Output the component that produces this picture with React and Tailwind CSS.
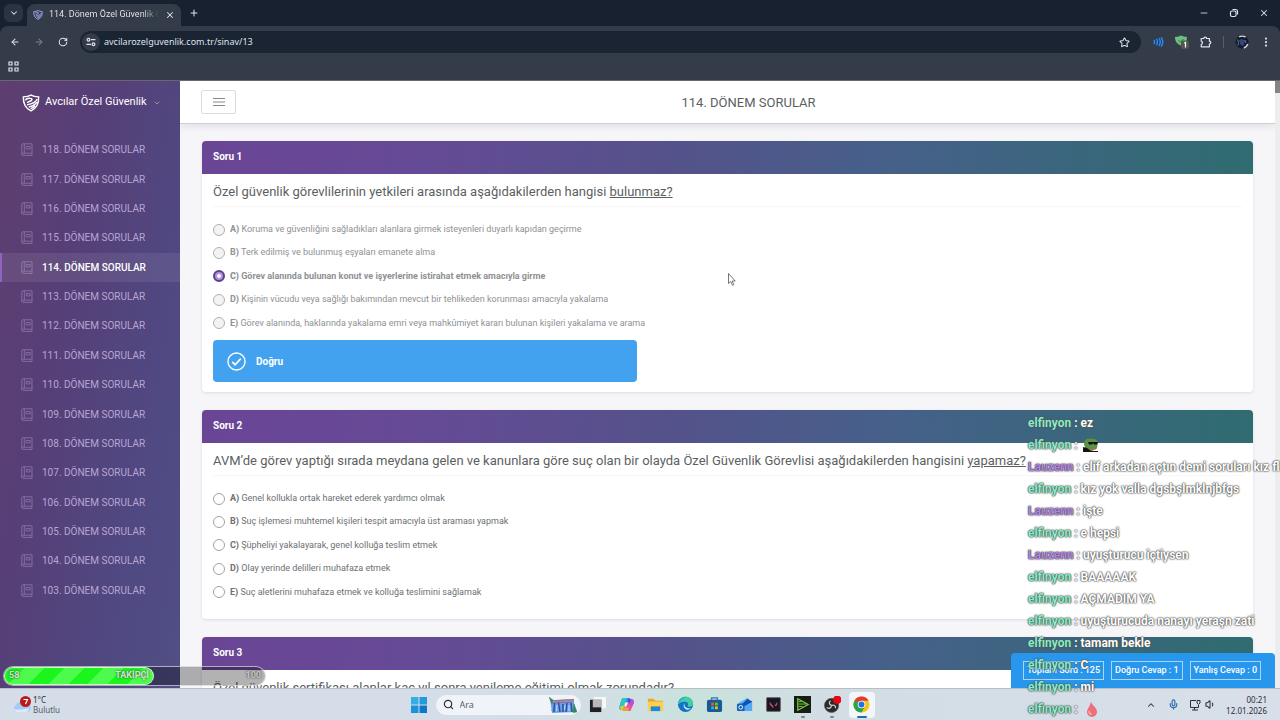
import React, { useState } from "react";
import {
  ChevronDown, ChevronUp, X, Plus, ArrowLeft, ArrowRight, RotateCw, Star, Minus, Search, Mic, Volume1, EllipsisVertical,
} from "lucide-react";

const exams = [118, 117, 116, 115, 114, 113, 112, 111, 110, 109, 108, 107, 106, 105, 104, 103];

const questions = [
  {
    no: 1,
    text: "Özel güvenlik görevlilerinin yetkileri arasında aşağıdakilerden hangisi ",
    end: "bulunmaz?",
    options: [
      "Koruma ve güvenliğini sağladıkları alanlara girmek isteyenleri duyarlı kapıdan geçirme",
      "Terk edilmiş ve bulunmuş eşyaları emanete alma",
      "Görev alanında bulunan konut ve işyerlerine istirahat etmek amacıyla girme",
      "Kişinin vücudu veya sağlığı bakımından mevcut bir tehlikeden korunması amacıyla yakalama",
      "Görev alanında, haklarında yakalama emri veya mahkûmiyet kararı bulunan kişileri yakalama ve arama",
    ],
    answered: 2,
  },
  {
    no: 2,
    text: "AVM’de görev yaptığı sırada meydana gelen ve kanunlara göre suç olan bir olayda Özel Güvenlik Görevlisi aşağıdakilerden hangisini ",
    end: "yapamaz?",
    options: [
      "Genel kollukla ortak hareket ederek yardımcı olmak",
      "Suç işlemesi muhtemel kişileri tespit amacıyla üst araması yapmak",
      "Şüpheliyi yakalayarak, genel kolluğa teslim etmek",
      "Olay yerinde delilleri muhafaza etmek",
      "Suç aletlerini muhafaza etmek ve kolluğa teslimini sağlamak",
    ],
  },
  {
    no: 3,
    text: "Özel güvenlik sertifikası alanlar kaç yıl sonra yenileme eğitimi olmak zorundadır?",
    end: "",
    options: [],
  },
];

const chat = [
  ["elfinyon", "ez"],
  ["elfinyon", "frog"],
  ["Lauzenn", "elif arkadan açtın demi soruları kız fl"],
  ["elfinyon", "kız yok valla dgsbşlmklnjbfgs"],
  ["Lauzenn", "işte"],
  ["elfinyon", "e hepsi"],
  ["Lauzenn", "uyuşturucu içtiysen"],
  ["elfinyon", "BAAAAAK"],
  ["elfinyon", "AÇMADIM YA"],
  ["elfinyon", "uyuşturucuda nanayı yeraşn zati"],
  ["elfinyon", "tamam bekle"],
  ["elfinyon", "C"],
  ["elfinyon", "mi"],
  ["elfinyon", "drop"],
];

function Shield({ className }) {
  return (
    <svg viewBox="0 0 20 20" className={className} fill="none" stroke="currentColor" strokeWidth="1.6" aria-hidden="true">
      <path d="M1.500 3.200C4.500 3 7.500 2.400 10 1.200c2.500 1.200 5.500 1.800 8.500 2 .3 6.500-1.600 12.300-8.500 15.600C3.100 15.500 1.200 9.700 1.500 3.200z" />
      <path d="M3.500 7c1.500-2 4.500-2.800 7-1.800 1 .5.500 1.800-.5 2.300L5.500 9.500M17 5.500c-1.500 3.600-6 5.500-11.500 6.600M16.500 9c-1.500 2.600-4.800 4.500-9 5.400M14.500 13c-1.200 1.600-2.800 2.600-5 3.200" />
    </svg>
  );
}

function Book() {
  return (
    <svg viewBox="0 0 12 13" className="h-[13px] w-3 shrink-0 opacity-45" fill="none" stroke="currentColor" strokeWidth="1" aria-hidden="true">
      <path d="M2 .8h9v9.400H2.200A1.500 1.500 0 0 0 .8 11.500V2A1.200 1.200 0 0 1 2 .8zM.8 11.500c0 .5.500.9 1.200.9h9v-2.200M3.300.8v9.400M5.200 3.500h4v2.400h-4z" />
    </svg>
  );
}

function Browser() {
  return (
    <header className="shrink-0 bg-[#17212f] font-['Noto_Sans',sans-serif] text-[#dfe3ea]">
      <div className="flex h-[26px] items-center">
        <button aria-label="Sekmelerde ara" className="ml-1 grid h-[18px] w-[19px] place-items-center rounded-md bg-[#2b3442]">
          <ChevronDown className="size-2.5" strokeWidth={2.5} />
        </button>
        <div className="ml-1 flex h-[22px] w-[154px] items-center self-end rounded-t-lg bg-[#343c49] px-1.5">
          <Shield className="size-2.5 shrink-0 text-[#aeb4ff]" />
          <span className="ml-1.5 w-[111px] overflow-hidden whitespace-nowrap bg-gradient-to-r from-[#eceff4] from-85% to-transparent bg-clip-text font-[Roboto,sans-serif] text-[9px] text-transparent">
            114. Dönem Özel Güvenlik Çıkm
          </span>
          <button aria-label="Sekmeyi kapat" className="ml-1.5"><X className="size-2.5" strokeWidth={2.5} /></button>
        </div>
        <button aria-label="Yeni sekme" className="ml-2"><Plus className="size-2.5" strokeWidth={2.5} /></button>
        <div className="ml-auto flex items-center gap-5 pr-[11px]">
          <button aria-label="Simge durumuna küçült"><Minus className="size-2.5" strokeWidth={2} /></button>
          <button aria-label="Önceki boyut">
            <svg viewBox="0 0 10 10" className="size-2.5" fill="none" stroke="currentColor" strokeWidth="1.200"><rect x="1.500" y="3" width="5.500" height="5.500" rx="1.500" /><path d="M3.500 1.500h3a2 2 0 0 1 2 2v3" /></svg>
          </button>
          <button aria-label="Kapat"><X className="size-2.5" strokeWidth={2.5} /></button>
        </div>
      </div>
      <div className="rounded-t-lg border-b border-[#6b6473] bg-[#343c49]">
        <div className="flex h-8 items-center pl-2.5 pr-2">
          <button aria-label="Geri"><ArrowLeft className="size-2.5" strokeWidth={2.5} /></button>
          <button aria-label="İleri" className="ml-3.5 text-[#7b828d]"><ArrowRight className="size-2.5" strokeWidth={2.5} /></button>
          <button aria-label="Yenile" className="ml-3.5"><RotateCw className="size-2.5" strokeWidth={2.5} /></button>
          <div className="ml-3 flex h-[22px] flex-1 items-center rounded-full bg-[#1b2432] pl-0.5 pr-[11px]">
            <span className="grid size-[18px] place-items-center rounded-full bg-[#343c49]">
              <svg viewBox="0 0 10 10" className="size-2.5" fill="none" stroke="currentColor" strokeWidth="1.200"><circle cx="2.500" cy="2.700" r="1.400" /><path d="M5 2.700h4.500M.5 7.300H5" /><circle cx="7.500" cy="7.300" r="1.400" /></svg>
            </span>
            <input aria-label="Adres" defaultValue="avcilarozelguvenlik.com.tr/sinav/13" className="ml-1 w-0 flex-1 bg-transparent text-[9px] outline-none" />
            <button aria-label="Yer işareti ekle"><Star className="size-[11px]" strokeWidth={2.2} /></button>
          </div>
          <div className="ml-3 flex items-center gap-[11px]">
            <svg viewBox="0 0 11 10" className="h-2.5 w-[11px]" fill="none" stroke="#1e90ff" strokeWidth="1.400" strokeLinecap="round"><path d="M1.200 3.500c.5 1 .5 2 0 3M3.700 2.300c1 1.800 1 3.600 0 5.400M6.200 1.500c1.400 2.300 1.400 4.700 0 7M8.500.8c1.700 2.800 1.700 5.600 0 8.400" /></svg>
            <svg viewBox="0 0 14 14" className="size-3.5"><path d="M0 2c3 0 4.500-.5 6-1.400C7.500 1.500 9.500 2 12 2c0 4.500-2 7-6 8.500C2 9 0 6.500 0 2z" fill="#68c27b" /><path d="M3.500 5.500l2 1.500 3-3" fill="none" stroke="#2d6a3e" /><rect x="6" y="5.500" width="8" height="8.500" rx="2" fill="#56544f" /><path d="M9.300 8.200l1.200-.8v5" fill="none" stroke="#fff" strokeWidth="1.200" /></svg>
            <svg viewBox="0 0 12 12" className="size-3" fill="none" stroke="currentColor" strokeWidth="1.200" strokeLinejoin="round"><path d="M1.200 2.500h2.600a1.400 1.400 0 0 1 2.800 0h2.800v2.700a1.400 1.400 0 0 1 0 2.800v2.800H1.200V8.500a1.800 1.800 0 0 0 0-3.400z" /></svg>
            <span className="h-3 w-px bg-[#565e6b]" />
            <svg viewBox="0 0 14 14" className="size-3.5"><circle cx="7" cy="7" r="6.500" fill="#121a2b" /><path d="M4 2C6 .8 8 .8 10.500 2M12.800 9c-.6 2-2 3.200-4 4" stroke="#d4dce6" strokeWidth="1.400" fill="none" /><path d="M4 5l3-1 3 1.500L8.500 11l-3-1z" fill="#34477a" /><path d="M2.500 4.500l1 3-.5 3M10 5l1 3" stroke="#6b7996" fill="none" /></svg>
            <button aria-label="Menü"><EllipsisVertical className="size-3" strokeWidth={2.5} /></button>
          </div>
        </div>
        <div className="flex h-[22px] items-start pl-2 pt-[3px]">
          <button aria-label="Uygulamalar">
            <svg viewBox="0 0 11 11" className="size-[11px]" fill="none" stroke="currentColor" strokeWidth="1.200"><path d="M1 1h3v3H1zM7 1h3v3H7zM1 7h3v3H1zM7 7h3v3H7z" /></svg>
          </button>
        </div>
      </div>
    </header>
  );
}

function Sidebar() {
  return (
    <nav aria-label="Sınavlar" className="flex w-[180px] shrink-0 flex-col bg-[linear-gradient(100deg,#5f3e70_0%,#563f77_35%,#504982_75%,#504f84_100%)] pb-[83px]">
      <a href="#home" className="flex h-[43px] items-center pl-[22px] text-white">
        <Shield className="size-[18px] shrink-0" />
        <span className="ml-[5px] text-[11px]">Avcılar Özel Güvenlik</span>
        <ChevronDown className="ml-1.5 size-2 opacity-60" />
      </a>
      <ul className="mt-[11px] flex flex-1 flex-col">
        {exams.map((n) => (
          <li key={n} className="flex flex-1">
            <a
              href={"#sinav-" + n}
              className={
                n === 114
                  ? "flex flex-1 items-center gap-[9px] border-l-2 border-[#8f63c4] bg-white/8 pl-[19px] text-[10px] font-medium text-white"
                  : "flex flex-1 items-center gap-[9px] border-l-2 border-transparent pl-[19px] text-[10px] text-[#b9a5d3]"
              }
            >
              <span className="flex text-[#b9a5d3]"><Book /></span>
              {n}. DÖNEM SORULAR
            </a>
          </li>
        ))}
      </ul>
    </nav>
  );
}

function Question({ q }) {
  const done = q.answered !== undefined;
  const [picked, setPicked] = useState(q.answered);
  return (
    <section className="shrink-0 rounded-sm bg-white shadow-[0_1px_3px_rgba(60,50,90,0.12)]">
      <h2 className="flex h-[33px] items-center rounded-t-sm bg-[linear-gradient(95deg,#6a4596_0%,#664a96_20%,#54528a_45%,#46608a_65%,#2f6c70_100%)] px-[11px] pb-0.5 text-[10px] font-bold text-white">
        Soru {q.no}
      </h2>
      <div className="px-[11px]">
        <p className="flex h-[33px] items-center whitespace-pre border-b border-[#f7f7f8] pt-1 text-[13px] leading-4 text-[#5c5f61]">
          {q.text}<u>{q.end}</u>
        </p>
        {q.options.length > 0 && (
          <div className={done ? "w-[424px] pb-[10px]" : "pb-[15px]"}>
            <div role="radiogroup" aria-label={"Soru " + q.no} className="mt-[11px] grid h-[117px] grid-rows-5">
              {q.options.map((o, i) => (
                <label key={o} className={"flex items-center whitespace-nowrap text-[9px] " + (done ? "text-[#8e9194] " : "text-[#6c6f73] ") + (picked === i ? "font-bold" : "")}>
                  <input
                    type="radio"
                    name={"soru" + q.no}
                    checked={picked === i}
                    onChange={() => !done && setPicked(i)}
                    className={
                      done
                        ? "mr-[5px] size-3 appearance-none rounded-full border border-[#aeb1b4] bg-[#f1f3f4] checked:border-2 checked:border-[#5b3f8f] checked:bg-[radial-gradient(circle,#fff_25%,#b494dd_40%)]"
                        : "mr-[5px] size-3 appearance-none rounded-full border border-[#a0a3a6] bg-white checked:border-[#5b3f8f] checked:bg-[#b494dd]"
                    }
                  />
                  <span><b>{"ABCDE"[i]})</b> {o}</span>
                </label>
              ))}
            </div>
            {done && (
              <div role="status" className="mt-[5px] flex h-[42px] items-center rounded-sm bg-[#42a2ef] pl-[14px] text-[10px] font-bold text-white">
                <svg viewBox="0 0 20 20" className="mr-2.5 size-[19px]" fill="none" stroke="currentColor" strokeWidth="1.500"><circle cx="10" cy="10" r="9" /><path d="M5.500 10.500l3 3 6-6.500" strokeWidth="1.800" /></svg>
                Doğru
              </div>
            )}
          </div>
        )}
      </div>
    </section>
  );
}

function Page() {
  return (
    <main className="flex min-w-0 flex-1 flex-col overflow-hidden bg-[#f6f5f8]">
      <div className="flex h-[43px] shrink-0 items-center border-b border-[#cfced3] bg-white pl-[21px] pr-[22px] shadow-[0_2px_8px_rgba(60,60,80,0.12)]">
        <button aria-label="Menüyü aç" className="grid h-6 w-[35px] place-items-center rounded-xs border border-[#dcdcde] text-[#86888c]">
          <svg viewBox="0 0 12 10" className="h-2.5 w-3" stroke="currentColor" strokeWidth="1"><path d="M0 1.500h12M0 5h12M0 8.500h12" /></svg>
        </button>
        <h1 className="flex-1 pl-2 pt-0.5 text-center text-[13px] text-[#5c5f61]">114. DÖNEM SORULAR</h1>
      </div>
      <div className="flex flex-1 flex-col gap-[18px] overflow-hidden px-[22px] pt-[17px]">
        {questions.map((q) => <Question key={q.no} q={q} />)}
      </div>
    </main>
  );
}

const appIcons = [
  ["Görev görünümü", <><path d="M5 1h13v12H5z" fill="#f7f7f7" /><path d="M1 4h12v13H1z" fill="#202022" /><path d="M4 4h9v8H4z" fill="#b9b9bb" /></>],
  ["Copilot", <><path d="M6 2h5c2 0 2 1 2.600 3l1 3H9L7 13c-.6 2-1.500 2-3 2-3 0-3-3-2.300-5L4 4c.4-1.300 1-2 2-2z" fill="#2a9df0" /><path d="M12 16H7c-2 0-2-1-2.600-3l-.8-3H8l3-5c.6-2 1.500-2 3-2 3 0 3.500 3 2.500 5.500L14 14c-.5 1.300-1 2-2 2z" fill="#e84fa5" /><path d="M2 9l1.500-5C4 2.500 5 2 6 2h3L6.500 10 4 12z" fill="#2fc7c0" /><path d="M2 11l4-1 1 5c-3 1-5-1-5-4z" fill="#c8d936" /><path d="M6 12l3 0 3 1-1 3H7c-1.500 0-2-1-2.400-3z" fill="#f79a35" /><path d="M10 5l1-2.500c2 0 2.500 1.500 3 3.500l2 1-4 1z" fill="#315bd8" /><path d="M7.500 7h3L9 11H6.500z" fill="#eef3f8" /><path d="M14 4c2 0 3 2 2.500 4l-3 3-1-4z" fill="#b34fe0" /></>],
  ["Dosya Gezgini", <><path d="M1 3h6l2 2h8v11H1z" fill="#e9a825" /><path d="M1 6h16v10H1z" fill="#ffd04f" /><path d="M4 11h10v5H4z" fill="#2388d4" /></>],
  ["Edge", <><circle cx="9" cy="9" r="8" fill="#1274c5" /><path d="M1 9a8 8 0 0 1 16-1c0 3-3 4-6 3 2-3 0-5-3-5-4 0-6 2-7 3z" fill="#41cfa8" /><path d="M1 9a8 8 0 0 1 10-7.700C6 2 3 5 1 9z" fill="#2aa9d8" /><path d="M8 8c-1 3 2 6 7 5-3 3-8 1-8-3 0-1 .5-1.700 1-2z" fill="#d7f1f5" /></>],
  ["Store", <><path d="M6 4V2h6v2" fill="none" stroke="#2d77b8" strokeWidth="1.500" /><rect x="1" y="4" width="16" height="13" rx="2" fill="#155c97" /><path d="M5.500 7h3v3h-3z" fill="#f35325" /><path d="M9.500 7h3v3h-3z" fill="#81bc06" /><path d="M5.500 11h3v3h-3z" fill="#35a9ee" /><path d="M9.500 11h3v3h-3z" fill="#ffba08" /></>],
  ["Outlook", <><path d="M3 7l9-5 5 4-9 5z" fill="#57bbf5" /><path d="M4 9l13-4v11H4z" fill="#2670dd" /><path d="M8 11l9-5v10H9z" fill="#53a9f4" /><path d="M12 3l5 3-9 5-2-2z" fill="#1550b4" /><rect x="1" y="8" width="8" height="8" rx="1.500" fill="#1260b8" /><circle cx="5" cy="12" r="2" fill="none" stroke="#fff" /></>],
  ["Valorant", <><path d="M2 2h14v14H2z" fill="#111923" stroke="#462333" /><path d="M5 6l4 5v1.500H8L5 9zM13 6v3l-1.200 1.500H10z" fill="#e0405a" /></>],
  ["Müzik düzenleyici", <><path d="M0 0h18v18H0z" fill="#171c17" /><path d="M4 3v12l11-6z" fill="none" stroke="#7bd13b" strokeWidth="1.300" /><path d="M5 6h3M5 8.500h8M5 11h4" stroke="#7bd13b" /></>],
  ["OBS", <><circle cx="8" cy="10" r="7.500" fill="#2a2a2d" stroke="#555" strokeWidth=".7" /><path d="M8 10c-3-1-3-4-1-5M8 10c3-1 5 1 4 3M8 10c-.5 3-3 4-5 2" stroke="#c9c9cd" strokeWidth="1.300" fill="none" /><circle cx="14" cy="4" r="4.500" fill="#e30613" /></>],
  ["Chrome", <><circle cx="9" cy="9" r="8.500" fill="#fbc116" /><path d="M9 9L1.600 4.800A8.500 8.500 0 0 1 16.400 5H9z" fill="#e33b2e" /><path d="M9 9L1.600 4.800A8.500 8.500 0 0 0 9 17.500l3.500-6z" fill="#2ba24c" /><circle cx="9" cy="9" r="4" fill="#fff" /><circle cx="9" cy="9" r="3.100" fill="#1a73e8" /></>],
];

function Taskbar() {
  return (
    <footer className="flex h-8 shrink-0 items-center border-t border-[#b9bec6] bg-[linear-gradient(90deg,#d5dde8_0%,#d5dde8_38%,#cfe0e2_50%,#c9e2dc_54%,#d2dde4_65%,#d8dfe9_100%)] font-['Noto_Sans',sans-serif] text-[#2a2f36]">
      <div className="flex flex-1 items-center pl-3">
        <svg viewBox="0 0 20 18" className="h-[18px] w-5"><path d="M4 16a4 4 0 0 1 0-7 5 5 0 0 1 9-1 4 4 0 0 1 3 8z" fill="#a9c9f5" /><path d="M2 13c3 1 10 1 15-1a4 4 0 0 1-3 4H4z" fill="#dbe9fd" /><circle cx="13.500" cy="5.500" r="5.500" fill="#b91c1c" /><path d="M11.500 3.500h4l-2 4.500" fill="none" stroke="#fff" strokeWidth="1.200" /></svg>
        <div className="ml-[1px] text-[8px] leading-[10px]">
          <div>1°C</div>
          <div className="text-[#565c65]">Bulutlu</div>
        </div>
      </div>
      <div className="flex items-center pl-2">
        <button aria-label="Başlat">
          <svg viewBox="0 0 16 16" className="size-4"><path d="M0 0h7.500v7.500H0z" fill="#35aee6" /><path d="M8.500 0H16v7.500H8.500z" fill="#219bdc" /><path d="M0 8.500h7.500V16H0z" fill="#1d92d8" /><path d="M8.500 8.500H16V16H8.500z" fill="#0e78c8" /></svg>
        </button>
        <label className="ml-[9px] flex h-5 w-[145px] items-center rounded-full bg-[#f0f4f9] pl-[7px] pr-1">
          <Search className="size-[11px]" strokeWidth={2.5} />
          <input aria-label="Ara" placeholder="Ara" className="ml-1.5 w-0 flex-1 bg-transparent text-[9px] outline-none placeholder:text-[#5a6068]" />
          <svg viewBox="0 0 28 16" className="h-4 w-7"><path d="M1 1l4 2 20-1v4l2 9-24 1z" fill="#6d9fe0" /><path d="M2 4l23-1.500" stroke="#d5623d" strokeWidth="1.200" /><path d="M4 6c6-1 14 0 20-1" stroke="#8a6cae" strokeWidth="1.200" fill="none" /><path d="M5.500 6l-.5 9M9.500 5.500L11 15M14 7v8M18 6l-1 9M22 6l1 9" stroke="#2b50ab" strokeWidth="1.500" /><path d="M8 8l-.5 6M16 8l-.5 5M20 8v6" stroke="#c3ddff" /><path d="M0 0l3.500 3-.5 4zM25 7l3 8-4 .500zM2 13l4 2" fill="#2e8b57" stroke="#2e8b57" strokeWidth=".5" /></svg>
        </label>
        <div className="ml-0.5 grid w-[294px] grid-cols-10">
          {appIcons.map(([name, art]) => (
            <button
              key={name}
              aria-label={name}
              className={name === "Chrome" ? "mx-auto flex h-[26px] w-[26px] flex-col items-center rounded-sm bg-[#f2f6fa] pt-1" : "mx-auto flex h-[26px] w-[26px] flex-col items-center pt-1"}
            >
              <svg viewBox="0 0 18 18" className="size-[17px] shrink-0">{art}</svg>
              {name === "Chrome" && <span className="mt-[3px] h-0.5 w-2.5 rounded-full bg-[#1f6cb5]" />}
              {(name === "OBS" || name === "Müzik düzenleyici") && <span className="mt-[3px] h-0.5 w-1 rounded-full bg-[#7c838c]" />}
            </button>
          ))}
        </div>
      </div>
      <div className="flex flex-1 items-center justify-end pr-[13px]">
        <ChevronUp className="mr-3 size-2.5" strokeWidth={2.5} />
        <Mic className="mr-2.5 size-[11px] text-[#2b6cb0]" strokeWidth={2.5} />
        <svg viewBox="0 0 12 12" className="mr-1 size-3" fill="none" stroke="currentColor"><path d="M7 1.500H1.500v7h8V6M5.500 8.500v2.500M3 11h6M8 1.500h3V4L9.500 5.500 8 4z" /></svg>
        <Volume1 className="mr-2.5 size-[11px]" strokeWidth={2.2} />
        <div className="text-right text-[8px] leading-[11px]">
          <div>00:21</div>
          <div>12.01.2026</div>
        </div>
      </div>
    </footer>
  );
}

function Chat() {
  return (
    <ul aria-label="Sohbet" className="absolute bottom-0 left-[1028px] w-[260px] text-[12px] font-bold text-white [text-shadow:0_0_1px_#333,0_0_2px_#555,0_0_2px_#777]">
      {chat.map(([who, msg], i) => (
        <li key={i} className="flex h-[22px] items-center whitespace-pre">
          <span className={who === "elfinyon" ? "text-[#86efcb]" : "text-[#b583e6]"}>{who}</span>
          {" : "}
          {msg === "frog" ? (
            <svg viewBox="0 0 16 14" className="ml-0.5 h-3.5 w-4" role="img" aria-label="kurbağa"><path d="M1 6C1 2 4 0 7 1c3-1 7 0 8 3l-1 6-5 3H3z" fill="#5c9147" /><path d="M5 4h10l-1 2.500h-3L10 5 9 6.500H6z" fill="#111" /><path d="M6 9.500c3 1 6 1 8 0l-1 2H8z" fill="#a3714f" /><path d="M0 9l4 1 4 3h7v1H0z" fill="#121512" /></svg>
          ) : msg === "drop" ? (
            <svg viewBox="0 0 14 16" className="ml-1 h-4 w-3.5" role="img" aria-label="damla"><path d="M6 .5c1 4 6 6 6 10.500a5 5 0 0 1-10 0C2 8 5.500 5 6 .5z" fill="#ec6f7a" /><path d="M4 10c0 2 1 3 2.500 3.500" stroke="#f8b3b5" strokeWidth="1.500" fill="none" /></svg>
          ) : (
            <span>{msg}</span>
          )}
        </li>
      ))}
    </ul>
  );
}

export default function App() {
  return (
    <div className="relative flex h-screen flex-col overflow-hidden font-[Roboto,sans-serif]">
      <Browser />
      <div className="relative flex min-h-0 flex-1">
        <Sidebar />
        <Page />
        <div className="w-[5px] shrink-0 bg-[#ededee]"><div className="h-3 bg-[#858585]" /></div>

        <div className="absolute bottom-0.5 left-[3px] flex h-5 w-[263px] items-center rounded-full border border-white/60 bg-black/30 text-[9px] font-bold text-white/80 [text-shadow:0_0_2px_#222]">
          <div className="flex h-full w-[150px] items-center justify-between rounded-full border border-white/70 bg-[repeating-linear-gradient(135deg,#1cf51c_0_14px,#4dfb4d_14px_28px)] px-1">
            <span>58</span>
            <span>TAKİPÇİ</span>
          </div>
          <span className="ml-auto mr-1 text-[#c9c9c9]">100</span>
        </div>

        <div className="absolute bottom-0 right-[5px] flex h-[35px] items-center gap-[7px] rounded-t-sm bg-[#2796ed] pl-3 pr-3.5 text-[9px] font-medium text-white">
          {["Toplam Soru : 125", "Doğru Cevap : 1", "Yanlış Cevap : 0"].map((t) => (
            <span key={t} className="flex h-[19px] items-center border border-white/60 px-[3px]">{t}</span>
          ))}
        </div>
      </div>
      <Taskbar />
      <Chat />
      <svg viewBox="0 0 8 13" className="pointer-events-none absolute left-[728px] top-[273px] h-[13px] w-2" aria-hidden="true"><path d="M.5.5v10l2.300-2 1.600 3.800 1.400-.6-1.600-3.700h3z" fill="#fff" stroke="#555" strokeWidth=".8" /></svg>
    </div>
  );
}
